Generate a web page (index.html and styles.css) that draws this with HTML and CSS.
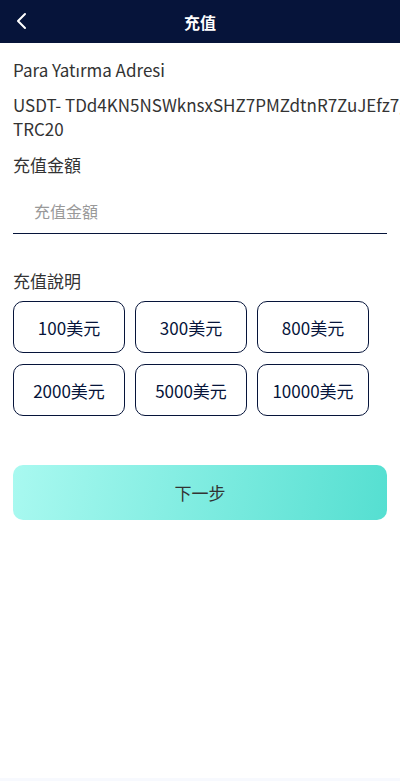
FILE: index.html
```html
<!DOCTYPE html>
<html lang="zh-Hant">
<head>
    <meta charset="utf-8">
    <title>充值</title>
    <link rel="stylesheet" href="styles.css">
</head>
<body>
    <div class="page">
        <div class="top-bar">
            <span class="back">
                <svg width="12" height="18" viewBox="0 0 12 18"><path d="M10 2 L3 9 L10 16" fill="none" stroke="#fff" stroke-width="2" stroke-linecap="round" stroke-linejoin="round"/></svg>
            </span>
            <h1>充值</h1>
        </div>

        <div class="content">
            <p class="line">Para Yatırma Adresi</p>
            <p class="line address"><span class="addr">USDT- TDd4KN5NSWknsxSHZ7PMZdtnR7ZuJEfz7g</span> TRC20</p>

            <p class="line label">充值金額</p>
            <input type="text" class="amount" placeholder="充值金額">

            <p class="line label note">充值說明</p>
            <div class="options">
                <button type="button" class="opt">100美元</button>
                <button type="button" class="opt">300美元</button>
                <button type="button" class="opt">800美元</button>
                <button type="button" class="opt">2000美元</button>
                <button type="button" class="opt">5000美元</button>
                <button type="button" class="opt">10000美元</button>
            </div>

            <button type="button" class="next">下一步</button>
        </div>
    </div>
</body>
</html>
```

FILE: styles.css
```css
html, body {
    margin: 0;
    padding: 0;
    overflow-x: hidden;
}

body {
    background: #f7f9fe;
    font-family: "Noto Sans CJK TC", "Noto Sans", sans-serif;
    color: #333;
}

.page {
    min-height: 778px;
    background: #fff;
}

.top-bar {
    height: 43px;
    background: #06143a;
    display: flex;
    align-items: center;
    justify-content: center;
    position: relative;
}

.top-bar h1 {
    margin: 0;
    font-size: 16px;
    font-weight: bold;
    color: #fff;
}

.back {
    position: absolute;
    left: 15px;
    top: 12px;
    display: flex;
}

.content {
    padding: 15px 13px 0;
}

.line {
    margin: 0;
    font-size: 17px;
    line-height: 24px;
}

.address {
    margin-top: 11px;
}

.addr {
    white-space: nowrap;
}

.label {
    margin-top: 12px;
}

.amount {
    display: block;
    box-sizing: border-box;
    width: 100%;
    height: 45px;
    margin-top: 12px;
    padding: 0 21px;
    border: none;
    border-bottom: 1px solid #06143a;
    font-family: inherit;
    font-size: 16px;
    outline: none;
}

.amount::placeholder {
    color: #999;
}

.note {
    margin-top: 35px;
}

.options {
    display: grid;
    grid-template-columns: repeat(3, 112px);
    gap: 11px 10px;
    margin-top: 8px;
}

.opt {
    height: 52px;
    background: #fff;
    border: 1px solid #06143a;
    border-radius: 10px;
    font-family: inherit;
    font-size: 17px;
    color: #06143a;
    padding: 0;
}

.next {
    display: block;
    width: 100%;
    height: 55px;
    margin-top: 49px;
    border: none;
    border-radius: 10px;
    background: linear-gradient(100deg, #a9f9f0, #55dfd1);
    font-family: inherit;
    font-size: 17px;
    color: #333;
}
```
